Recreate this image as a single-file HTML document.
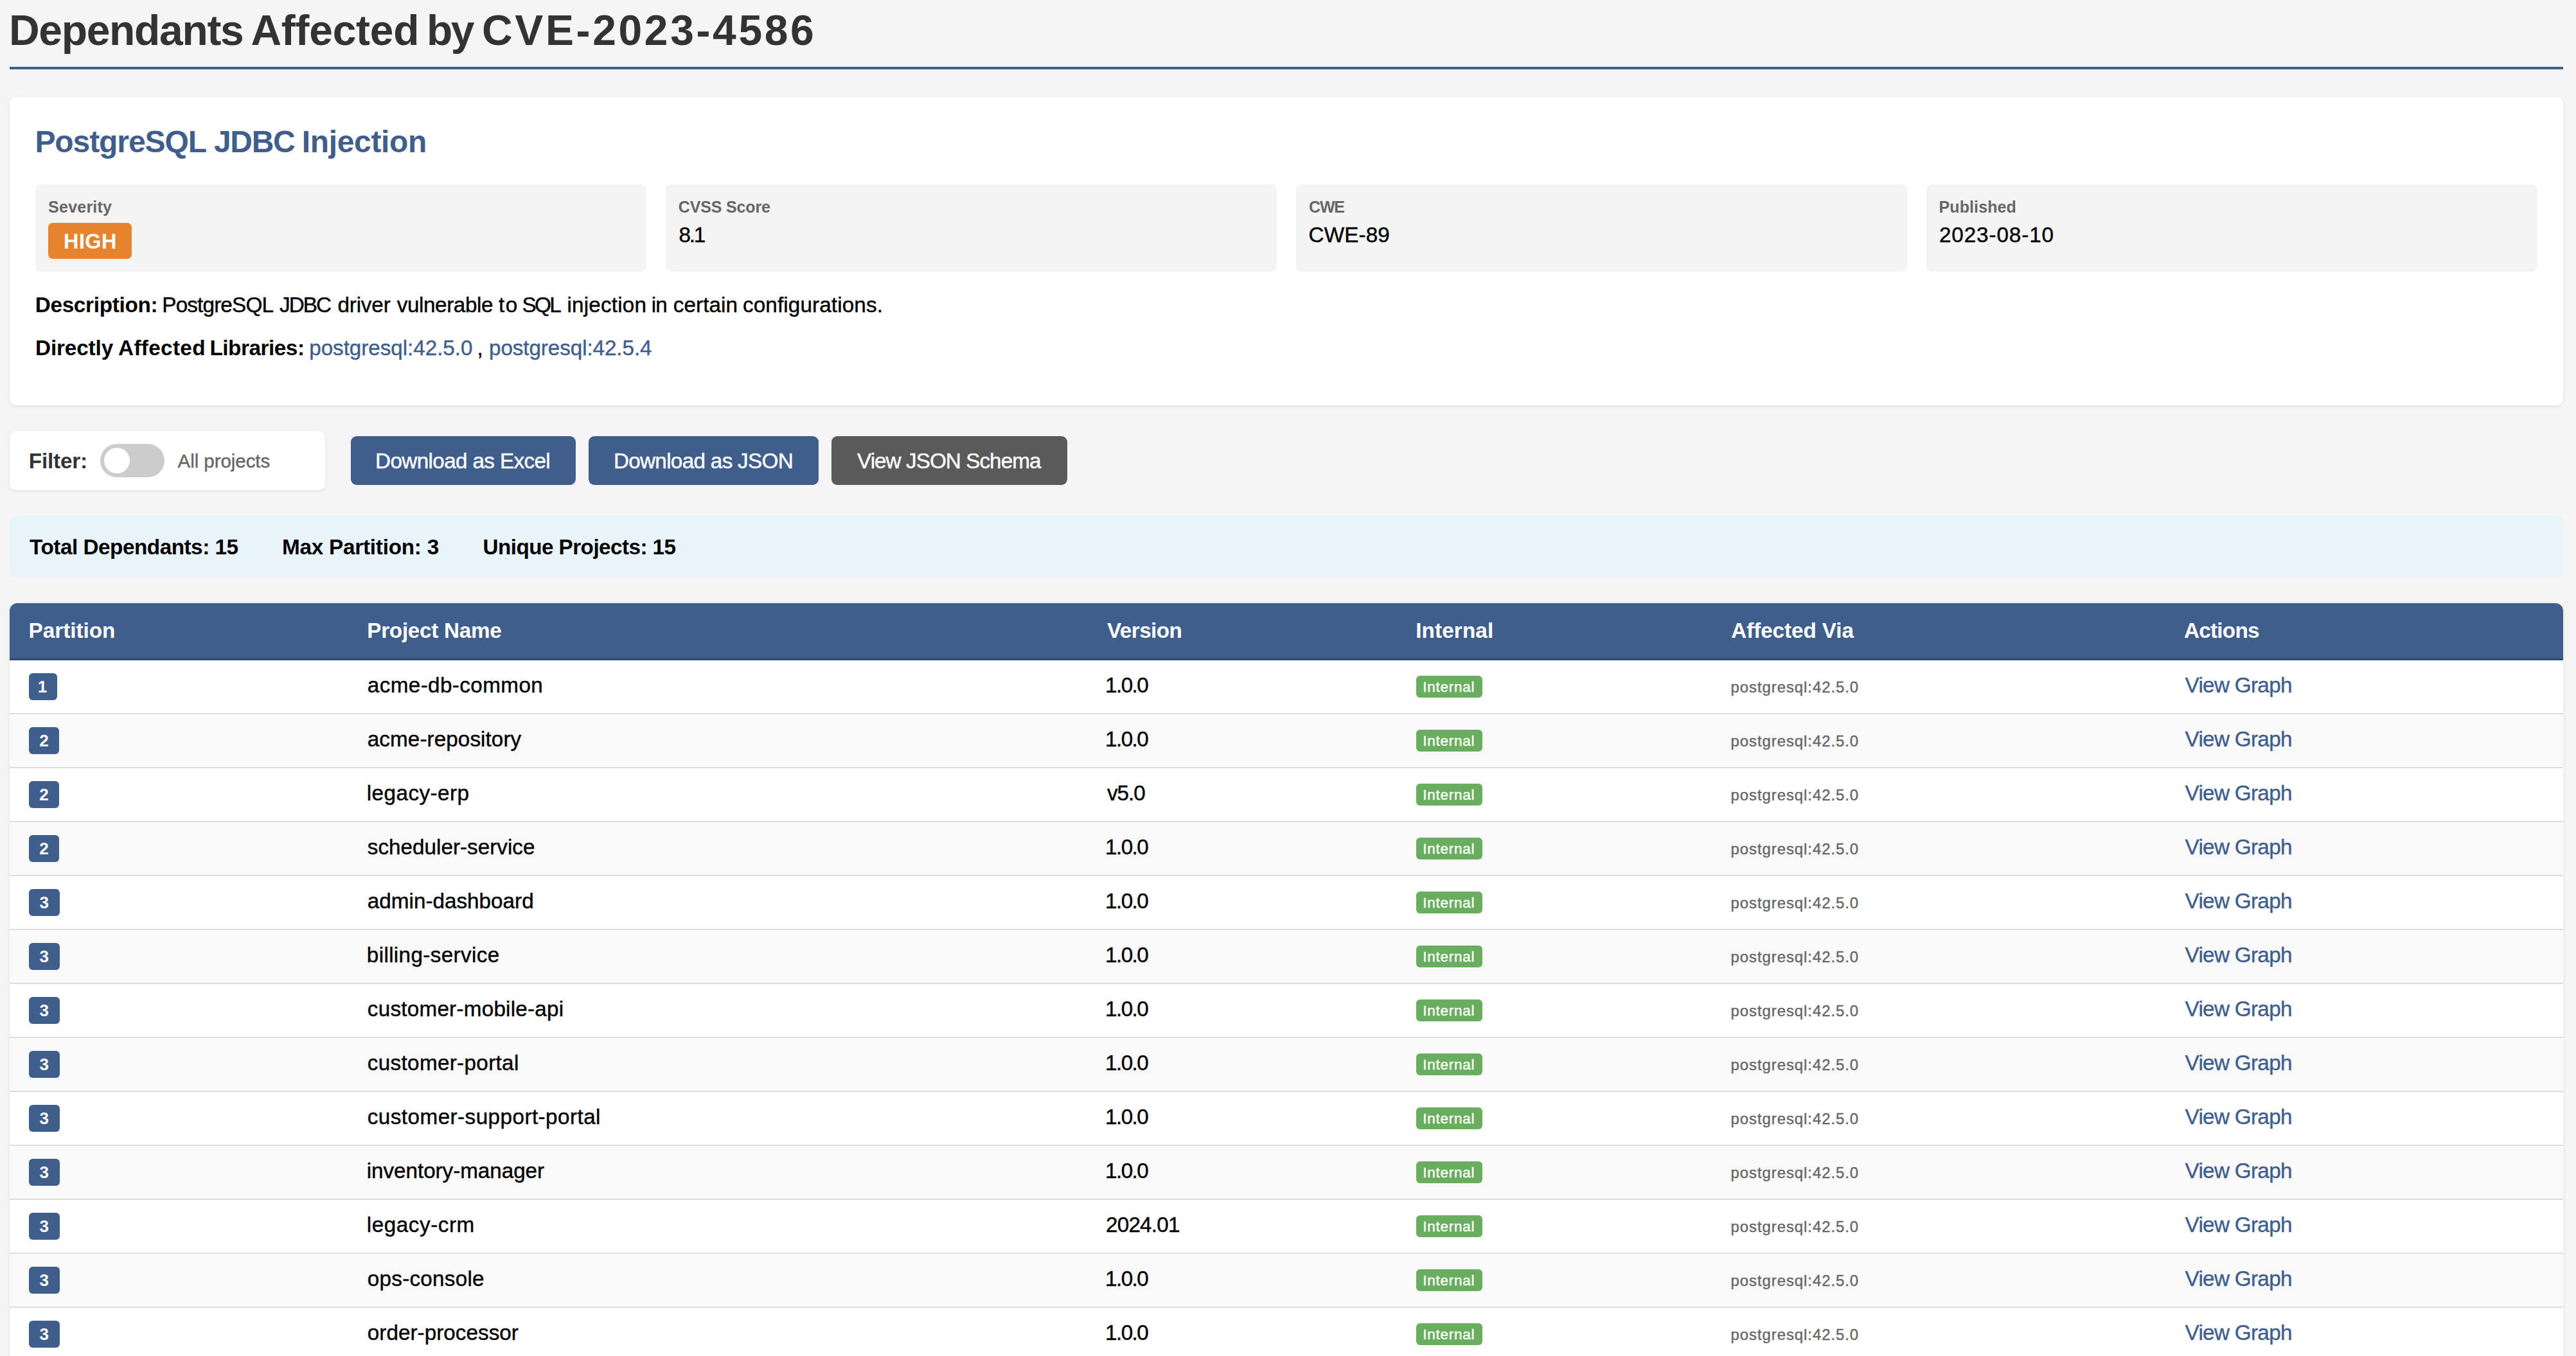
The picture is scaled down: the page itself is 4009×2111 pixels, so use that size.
<!DOCTYPE html>
<html><head><meta charset="utf-8"><title>Dependants Affected by CVE-2023-4586</title>
<style>
html,body{margin:0;padding:0;background:#f5f5f5;width:4009px;height:2111px;overflow:hidden;position:relative}
.b{position:absolute;box-sizing:border-box}
.t{position:absolute;white-space:nowrap}
</style></head><body>
<div class="b" style="left:15px;top:104px;width:3974px;height:4px;background:#3f5e8c"></div>
<div class="b" style="left:15px;top:151px;width:3974px;height:480px;background:#fff;border-radius:10px;box-shadow:0 2px 6px rgba(0,0,0,0.08)"></div>
<div class="b" style="left:55px;top:287px;width:950.5px;height:135.5px;background:#f4f4f4;border-radius:8px"></div>
<div class="b" style="left:1036px;top:287px;width:950.5px;height:135.5px;background:#f4f4f4;border-radius:8px"></div>
<div class="b" style="left:2017px;top:287px;width:950.5px;height:135.5px;background:#f4f4f4;border-radius:8px"></div>
<div class="b" style="left:2998px;top:287px;width:950.5px;height:135.5px;background:#f4f4f4;border-radius:8px"></div>
<div class="b" style="left:75px;top:347px;width:130px;height:55.8px;background:#e6832f;border-radius:7px"></div>
<div class="b" style="left:15px;top:671px;width:491px;height:91.6px;background:#fff;border-radius:10px;box-shadow:0 2px 6px rgba(0,0,0,0.08)"></div>
<div class="b" style="left:156px;top:691px;width:100px;height:52px;background:#ccc;border-radius:26px"></div>
<div class="b" style="left:162px;top:697px;width:40px;height:40px;background:#fff;border-radius:50%"></div>
<div class="b" style="left:546px;top:679.2px;width:350px;height:75.5px;background:#3f5e8c;border-radius:9px"></div>
<div class="b" style="left:916px;top:679.2px;width:357.6px;height:75.5px;background:#3f5e8c;border-radius:9px"></div>
<div class="b" style="left:1294px;top:679.2px;width:366.5px;height:75.5px;background:#5a5a5a;border-radius:9px"></div>
<div class="b" style="left:15px;top:803px;width:3974px;height:95.5px;background:#e8f4fa;border-radius:10px"></div>
<div class="b" style="left:15px;top:939px;width:3974px;height:1212px;background:#fff;border-radius:12px;box-shadow:0 2px 6px rgba(0,0,0,0.08);overflow:hidden"></div>
<div class="b" style="left:15px;top:939px;width:3974px;height:86px;background:#3f5e8c;border-radius:12px 12px 0 0"></div>
<div class="b" style="left:15px;top:1025px;width:3974px;height:3px;background:#2d4a70"></div>
<div class="b" style="left:15px;top:1110px;width:3974px;height:2px;background:#dddddd"></div>
<div class="b" style="left:45px;top:1048px;width:44px;height:42px;background:#3f5e8c;border-radius:6px"></div>
<div class="b" style="left:2204.2px;top:1052px;width:102.5px;height:34px;background:#69ad5e;border-radius:6px"></div>
<div class="b" style="left:15px;top:1112px;width:3974px;height:82px;background:#f9f9f9"></div>
<div class="b" style="left:15px;top:1194px;width:3974px;height:2px;background:#dddddd"></div>
<div class="b" style="left:45px;top:1132px;width:47px;height:42px;background:#3f5e8c;border-radius:6px"></div>
<div class="b" style="left:2204.2px;top:1136px;width:102.5px;height:34px;background:#69ad5e;border-radius:6px"></div>
<div class="b" style="left:15px;top:1278px;width:3974px;height:2px;background:#dddddd"></div>
<div class="b" style="left:45px;top:1216px;width:47px;height:42px;background:#3f5e8c;border-radius:6px"></div>
<div class="b" style="left:2204.2px;top:1220px;width:102.5px;height:34px;background:#69ad5e;border-radius:6px"></div>
<div class="b" style="left:15px;top:1280px;width:3974px;height:82px;background:#f9f9f9"></div>
<div class="b" style="left:15px;top:1362px;width:3974px;height:2px;background:#dddddd"></div>
<div class="b" style="left:45px;top:1300px;width:47px;height:42px;background:#3f5e8c;border-radius:6px"></div>
<div class="b" style="left:2204.2px;top:1304px;width:102.5px;height:34px;background:#69ad5e;border-radius:6px"></div>
<div class="b" style="left:15px;top:1446px;width:3974px;height:2px;background:#dddddd"></div>
<div class="b" style="left:45px;top:1384px;width:48px;height:42px;background:#3f5e8c;border-radius:6px"></div>
<div class="b" style="left:2204.2px;top:1388px;width:102.5px;height:34px;background:#69ad5e;border-radius:6px"></div>
<div class="b" style="left:15px;top:1448px;width:3974px;height:82px;background:#f9f9f9"></div>
<div class="b" style="left:15px;top:1530px;width:3974px;height:2px;background:#dddddd"></div>
<div class="b" style="left:45px;top:1468px;width:48px;height:42px;background:#3f5e8c;border-radius:6px"></div>
<div class="b" style="left:2204.2px;top:1472px;width:102.5px;height:34px;background:#69ad5e;border-radius:6px"></div>
<div class="b" style="left:15px;top:1614px;width:3974px;height:2px;background:#dddddd"></div>
<div class="b" style="left:45px;top:1552px;width:48px;height:42px;background:#3f5e8c;border-radius:6px"></div>
<div class="b" style="left:2204.2px;top:1556px;width:102.5px;height:34px;background:#69ad5e;border-radius:6px"></div>
<div class="b" style="left:15px;top:1616px;width:3974px;height:82px;background:#f9f9f9"></div>
<div class="b" style="left:15px;top:1698px;width:3974px;height:2px;background:#dddddd"></div>
<div class="b" style="left:45px;top:1636px;width:48px;height:42px;background:#3f5e8c;border-radius:6px"></div>
<div class="b" style="left:2204.2px;top:1640px;width:102.5px;height:34px;background:#69ad5e;border-radius:6px"></div>
<div class="b" style="left:15px;top:1782px;width:3974px;height:2px;background:#dddddd"></div>
<div class="b" style="left:45px;top:1720px;width:48px;height:42px;background:#3f5e8c;border-radius:6px"></div>
<div class="b" style="left:2204.2px;top:1724px;width:102.5px;height:34px;background:#69ad5e;border-radius:6px"></div>
<div class="b" style="left:15px;top:1784px;width:3974px;height:82px;background:#f9f9f9"></div>
<div class="b" style="left:15px;top:1866px;width:3974px;height:2px;background:#dddddd"></div>
<div class="b" style="left:45px;top:1804px;width:48px;height:42px;background:#3f5e8c;border-radius:6px"></div>
<div class="b" style="left:2204.2px;top:1808px;width:102.5px;height:34px;background:#69ad5e;border-radius:6px"></div>
<div class="b" style="left:15px;top:1950px;width:3974px;height:2px;background:#dddddd"></div>
<div class="b" style="left:45px;top:1888px;width:48px;height:42px;background:#3f5e8c;border-radius:6px"></div>
<div class="b" style="left:2204.2px;top:1892px;width:102.5px;height:34px;background:#69ad5e;border-radius:6px"></div>
<div class="b" style="left:15px;top:1952px;width:3974px;height:82px;background:#f9f9f9"></div>
<div class="b" style="left:15px;top:2034px;width:3974px;height:2px;background:#dddddd"></div>
<div class="b" style="left:45px;top:1972px;width:48px;height:42px;background:#3f5e8c;border-radius:6px"></div>
<div class="b" style="left:2204.2px;top:1976px;width:102.5px;height:34px;background:#69ad5e;border-radius:6px"></div>
<div class="b" style="left:15px;top:2118px;width:3974px;height:2px;background:#dddddd"></div>
<div class="b" style="left:45px;top:2056px;width:48px;height:42px;background:#3f5e8c;border-radius:6px"></div>
<div class="b" style="left:2204.2px;top:2060px;width:102.5px;height:34px;background:#69ad5e;border-radius:6px"></div>
<div class="t" style="left:14.0px;top:14.0px;font:bold 66px/1 'Liberation Sans', sans-serif;color:#333;letter-spacing:-1.33px;">Dependants</div>
<div class="t" style="left:390.4px;top:14.0px;font:bold 66px/1 'Liberation Sans', sans-serif;color:#333;letter-spacing:-0.26px;">Affected</div>
<div class="t" style="left:664.0px;top:14.0px;font:bold 66px/1 'Liberation Sans', sans-serif;color:#333;letter-spacing:-2.50px;">by</div>
<div class="t" style="left:750.0px;top:14.0px;font:bold 66px/1 'Liberation Sans', sans-serif;color:#333;letter-spacing:3.62px;">CVE-2023-4586</div>
<div class="t" style="left:54.4px;top:197.1px;font:bold 48px/1 'Liberation Sans', sans-serif;color:#3f5e8c;letter-spacing:-1.08px;">PostgreSQL</div>
<div class="t" style="left:332.9px;top:197.1px;font:bold 48px/1 'Liberation Sans', sans-serif;color:#3f5e8c;letter-spacing:-1.27px;">JDBC</div>
<div class="t" style="left:469.8px;top:197.1px;font:bold 48px/1 'Liberation Sans', sans-serif;color:#3f5e8c;letter-spacing:-0.34px;">Injection</div>
<div class="t" style="left:75.1px;top:310.0px;font:bold 25px/1 'Liberation Sans', sans-serif;color:#666;letter-spacing:0.23px;">Severity</div>
<div class="t" style="left:1055.8px;top:310.0px;font:bold 25px/1 'Liberation Sans', sans-serif;color:#666;letter-spacing:-0.16px;">CVSS Score</div>
<div class="t" style="left:2037.0px;top:310.0px;font:bold 25px/1 'Liberation Sans', sans-serif;color:#666;letter-spacing:-1.15px;">CWE</div>
<div class="t" style="left:3017.6px;top:310.0px;font:bold 25px/1 'Liberation Sans', sans-serif;color:#666;letter-spacing:0.09px;">Published</div>
<div class="t" style="left:99.0px;top:359.9px;font:bold 32.5px/1 'Liberation Sans', sans-serif;color:#fff;letter-spacing:0.43px;">HIGH</div>
<div class="t" style="left:1056.6px;top:349.3px;font:33.3px/1 'Liberation Sans', sans-serif;color:#000;letter-spacing:-2.30px;-webkit-text-stroke:0.4px #000;">8.1</div>
<div class="t" style="left:2036.6px;top:349.3px;font:33.3px/1 'Liberation Sans', sans-serif;color:#000;letter-spacing:0.08px;-webkit-text-stroke:0.4px #000;">CWE-89</div>
<div class="t" style="left:3017.9px;top:349.3px;font:33.3px/1 'Liberation Sans', sans-serif;color:#000;letter-spacing:0.88px;-webkit-text-stroke:0.4px #000;">2023-08-10</div>
<div class="t" style="left:54.7px;top:457.6px;font:bold 33.3px/1 'Liberation Sans', sans-serif;color:#000;letter-spacing:-0.30px;">Description:</div>
<div class="t" style="left:252.3px;top:457.6px;font:33.3px/1 'Liberation Sans', sans-serif;color:#000;letter-spacing:-0.86px;-webkit-text-stroke:0.4px #000;">PostgreSQL</div>
<div class="t" style="left:434.9px;top:457.6px;font:33.3px/1 'Liberation Sans', sans-serif;color:#000;letter-spacing:-1.90px;-webkit-text-stroke:0.4px #000;">JDBC</div>
<div class="t" style="left:525.4px;top:457.6px;font:33.3px/1 'Liberation Sans', sans-serif;color:#000;letter-spacing:-0.18px;-webkit-text-stroke:0.4px #000;">driver</div>
<div class="t" style="left:617.8px;top:457.6px;font:33.3px/1 'Liberation Sans', sans-serif;color:#000;letter-spacing:-0.44px;-webkit-text-stroke:0.4px #000;">vulnerable</div>
<div class="t" style="left:776.0px;top:457.6px;font:33.3px/1 'Liberation Sans', sans-serif;color:#000;letter-spacing:1.40px;-webkit-text-stroke:0.4px #000;">to</div>
<div class="t" style="left:812.6px;top:457.6px;font:33.3px/1 'Liberation Sans', sans-serif;color:#000;letter-spacing:-2.70px;-webkit-text-stroke:0.4px #000;">SQL</div>
<div class="t" style="left:882.4px;top:457.6px;font:33.3px/1 'Liberation Sans', sans-serif;color:#000;letter-spacing:0.17px;-webkit-text-stroke:0.4px #000;">injection</div>
<div class="t" style="left:1013.7px;top:457.6px;font:33.3px/1 'Liberation Sans', sans-serif;color:#000;letter-spacing:-0.80px;-webkit-text-stroke:0.4px #000;">in</div>
<div class="t" style="left:1047.8px;top:457.6px;font:33.3px/1 'Liberation Sans', sans-serif;color:#000;letter-spacing:0.05px;-webkit-text-stroke:0.4px #000;">certain</div>
<div class="t" style="left:1155.9px;top:457.6px;font:33.3px/1 'Liberation Sans', sans-serif;color:#000;letter-spacing:0.11px;-webkit-text-stroke:0.4px #000;">configurations.</div>
<div class="t" style="left:55.0px;top:524.7px;font:bold 33.3px/1 'Liberation Sans', sans-serif;color:#000;letter-spacing:-0.14px;">Directly</div>
<div class="t" style="left:184.0px;top:524.7px;font:bold 33.3px/1 'Liberation Sans', sans-serif;color:#000;letter-spacing:0.33px;">Affected</div>
<div class="t" style="left:326.4px;top:524.7px;font:bold 33.3px/1 'Liberation Sans', sans-serif;color:#000;letter-spacing:-0.46px;">Libraries:</div>
<div class="t" style="left:481.2px;top:524.7px;font:33.3px/1 'Liberation Sans', sans-serif;color:#3f5e8c;letter-spacing:-0.07px;-webkit-text-stroke:0.4px #3f5e8c;">postgresql:42.5.0</div>
<div class="t" style="left:742.5px;top:524.7px;font:33.3px/1 'Liberation Sans', sans-serif;color:#000;letter-spacing:0.00px;-webkit-text-stroke:0.4px #000;">,</div>
<div class="t" style="left:761.0px;top:524.7px;font:33.3px/1 'Liberation Sans', sans-serif;color:#3f5e8c;letter-spacing:-0.12px;-webkit-text-stroke:0.4px #3f5e8c;">postgresql:42.5.4</div>
<div class="t" style="left:44.8px;top:701.1px;font:bold 33.3px/1 'Liberation Sans', sans-serif;color:#333;letter-spacing:-0.20px;">Filter:</div>
<div class="t" style="left:276.5px;top:703.1px;font:29.5px/1 'Liberation Sans', sans-serif;color:#666;letter-spacing:-0.05px;-webkit-text-stroke:0.4px #666;">All projects</div>
<div class="t" style="left:584.0px;top:701.3px;font:33.3px/1 'Liberation Sans', sans-serif;color:#fff;letter-spacing:-0.65px;-webkit-text-stroke:0.4px #fff;">Download as Excel</div>
<div class="t" style="left:954.9px;top:701.3px;font:33.3px/1 'Liberation Sans', sans-serif;color:#fff;letter-spacing:-0.71px;-webkit-text-stroke:0.4px #fff;">Download as JSON</div>
<div class="t" style="left:1334.0px;top:701.3px;font:33.3px/1 'Liberation Sans', sans-serif;color:#fff;letter-spacing:-0.97px;-webkit-text-stroke:0.4px #fff;">View JSON Schema</div>
<div class="t" style="left:46.1px;top:835.4px;font:bold 33.3px/1 'Liberation Sans', sans-serif;color:#000;letter-spacing:-0.49px;">Total Dependants: 15</div>
<div class="t" style="left:439.0px;top:835.4px;font:bold 33.3px/1 'Liberation Sans', sans-serif;color:#000;letter-spacing:-0.25px;">Max Partition: 3</div>
<div class="t" style="left:751.6px;top:835.4px;font:bold 33.3px/1 'Liberation Sans', sans-serif;color:#000;letter-spacing:-0.58px;">Unique Projects: 15</div>
<div class="t" style="left:44.5px;top:965.2px;font:bold 33.3px/1 'Liberation Sans', sans-serif;color:#fff;letter-spacing:-0.01px;">Partition</div>
<div class="t" style="left:571.3px;top:965.2px;font:bold 33.3px/1 'Liberation Sans', sans-serif;color:#fff;letter-spacing:-0.30px;">Project Name</div>
<div class="t" style="left:1723.0px;top:965.2px;font:bold 33.3px/1 'Liberation Sans', sans-serif;color:#fff;letter-spacing:-0.57px;">Version</div>
<div class="t" style="left:2203.2px;top:965.2px;font:bold 33.3px/1 'Liberation Sans', sans-serif;color:#fff;letter-spacing:0.11px;">Internal</div>
<div class="t" style="left:2694.2px;top:965.2px;font:bold 33.3px/1 'Liberation Sans', sans-serif;color:#fff;letter-spacing:-0.09px;">Affected Via</div>
<div class="t" style="left:3398.9px;top:965.2px;font:bold 33.3px/1 'Liberation Sans', sans-serif;color:#fff;letter-spacing:-0.75px;">Actions</div>
<div class="t" style="left:58.8px;top:1056.1px;font:bold 26px/1 'Liberation Sans', sans-serif;color:#fff;letter-spacing:0.00px;">1</div>
<div class="t" style="left:571.8px;top:1049.6px;font:33.3px/1 'Liberation Sans', sans-serif;color:#000;letter-spacing:0.36px;-webkit-text-stroke:0.4px #000;">acme-db-common</div>
<div class="t" style="left:1720.0px;top:1049.8px;font:33.3px/1 'Liberation Sans', sans-serif;color:#000;letter-spacing:-1.57px;-webkit-text-stroke:0.4px #000;">1.0.0</div>
<div class="t" style="left:2214.3px;top:1059.3px;font:22.5px/1 'Liberation Sans', sans-serif;color:#fff;letter-spacing:0.73px;-webkit-text-stroke:0.4px #fff;">Internal</div>
<div class="t" style="left:2693.5px;top:1057.7px;font:24px/1 'Liberation Sans', sans-serif;color:#666;letter-spacing:0.91px;-webkit-text-stroke:0.4px #666;">postgresql:42.5.0</div>
<div class="t" style="left:3400.5px;top:1050.0px;font:33.3px/1 'Liberation Sans', sans-serif;color:#3f5e8c;letter-spacing:-0.71px;-webkit-text-stroke:0.4px #3f5e8c;">View Graph</div>
<div class="t" style="left:61.2px;top:1140.1px;font:bold 26px/1 'Liberation Sans', sans-serif;color:#fff;letter-spacing:0.00px;">2</div>
<div class="t" style="left:571.8px;top:1133.6px;font:33.3px/1 'Liberation Sans', sans-serif;color:#000;letter-spacing:0.05px;-webkit-text-stroke:0.4px #000;">acme-repository</div>
<div class="t" style="left:1720.0px;top:1133.8px;font:33.3px/1 'Liberation Sans', sans-serif;color:#000;letter-spacing:-1.57px;-webkit-text-stroke:0.4px #000;">1.0.0</div>
<div class="t" style="left:2214.3px;top:1143.3px;font:22.5px/1 'Liberation Sans', sans-serif;color:#fff;letter-spacing:0.73px;-webkit-text-stroke:0.4px #fff;">Internal</div>
<div class="t" style="left:2693.5px;top:1141.7px;font:24px/1 'Liberation Sans', sans-serif;color:#666;letter-spacing:0.91px;-webkit-text-stroke:0.4px #666;">postgresql:42.5.0</div>
<div class="t" style="left:3400.5px;top:1134.0px;font:33.3px/1 'Liberation Sans', sans-serif;color:#3f5e8c;letter-spacing:-0.71px;-webkit-text-stroke:0.4px #3f5e8c;">View Graph</div>
<div class="t" style="left:61.2px;top:1224.1px;font:bold 26px/1 'Liberation Sans', sans-serif;color:#fff;letter-spacing:0.00px;">2</div>
<div class="t" style="left:570.8px;top:1217.6px;font:33.3px/1 'Liberation Sans', sans-serif;color:#000;letter-spacing:0.41px;-webkit-text-stroke:0.4px #000;">legacy-erp</div>
<div class="t" style="left:1723.0px;top:1217.8px;font:33.3px/1 'Liberation Sans', sans-serif;color:#000;letter-spacing:-1.03px;-webkit-text-stroke:0.4px #000;">v5.0</div>
<div class="t" style="left:2214.3px;top:1227.3px;font:22.5px/1 'Liberation Sans', sans-serif;color:#fff;letter-spacing:0.73px;-webkit-text-stroke:0.4px #fff;">Internal</div>
<div class="t" style="left:2693.5px;top:1225.7px;font:24px/1 'Liberation Sans', sans-serif;color:#666;letter-spacing:0.91px;-webkit-text-stroke:0.4px #666;">postgresql:42.5.0</div>
<div class="t" style="left:3400.5px;top:1218.0px;font:33.3px/1 'Liberation Sans', sans-serif;color:#3f5e8c;letter-spacing:-0.71px;-webkit-text-stroke:0.4px #3f5e8c;">View Graph</div>
<div class="t" style="left:61.2px;top:1308.1px;font:bold 26px/1 'Liberation Sans', sans-serif;color:#fff;letter-spacing:0.00px;">2</div>
<div class="t" style="left:571.8px;top:1301.6px;font:33.3px/1 'Liberation Sans', sans-serif;color:#000;letter-spacing:-0.02px;-webkit-text-stroke:0.4px #000;">scheduler-service</div>
<div class="t" style="left:1720.0px;top:1301.8px;font:33.3px/1 'Liberation Sans', sans-serif;color:#000;letter-spacing:-1.57px;-webkit-text-stroke:0.4px #000;">1.0.0</div>
<div class="t" style="left:2214.3px;top:1311.3px;font:22.5px/1 'Liberation Sans', sans-serif;color:#fff;letter-spacing:0.73px;-webkit-text-stroke:0.4px #fff;">Internal</div>
<div class="t" style="left:2693.5px;top:1309.7px;font:24px/1 'Liberation Sans', sans-serif;color:#666;letter-spacing:0.91px;-webkit-text-stroke:0.4px #666;">postgresql:42.5.0</div>
<div class="t" style="left:3400.5px;top:1302.0px;font:33.3px/1 'Liberation Sans', sans-serif;color:#3f5e8c;letter-spacing:-0.71px;-webkit-text-stroke:0.4px #3f5e8c;">View Graph</div>
<div class="t" style="left:61.5px;top:1392.1px;font:bold 26px/1 'Liberation Sans', sans-serif;color:#fff;letter-spacing:0.00px;">3</div>
<div class="t" style="left:571.8px;top:1385.6px;font:33.3px/1 'Liberation Sans', sans-serif;color:#000;letter-spacing:-0.02px;-webkit-text-stroke:0.4px #000;">admin-dashboard</div>
<div class="t" style="left:1720.0px;top:1385.8px;font:33.3px/1 'Liberation Sans', sans-serif;color:#000;letter-spacing:-1.57px;-webkit-text-stroke:0.4px #000;">1.0.0</div>
<div class="t" style="left:2214.3px;top:1395.3px;font:22.5px/1 'Liberation Sans', sans-serif;color:#fff;letter-spacing:0.73px;-webkit-text-stroke:0.4px #fff;">Internal</div>
<div class="t" style="left:2693.5px;top:1393.7px;font:24px/1 'Liberation Sans', sans-serif;color:#666;letter-spacing:0.91px;-webkit-text-stroke:0.4px #666;">postgresql:42.5.0</div>
<div class="t" style="left:3400.5px;top:1386.0px;font:33.3px/1 'Liberation Sans', sans-serif;color:#3f5e8c;letter-spacing:-0.71px;-webkit-text-stroke:0.4px #3f5e8c;">View Graph</div>
<div class="t" style="left:61.5px;top:1476.1px;font:bold 26px/1 'Liberation Sans', sans-serif;color:#fff;letter-spacing:0.00px;">3</div>
<div class="t" style="left:570.8px;top:1469.6px;font:33.3px/1 'Liberation Sans', sans-serif;color:#000;letter-spacing:0.34px;-webkit-text-stroke:0.4px #000;">billing-service</div>
<div class="t" style="left:1720.0px;top:1469.8px;font:33.3px/1 'Liberation Sans', sans-serif;color:#000;letter-spacing:-1.57px;-webkit-text-stroke:0.4px #000;">1.0.0</div>
<div class="t" style="left:2214.3px;top:1479.3px;font:22.5px/1 'Liberation Sans', sans-serif;color:#fff;letter-spacing:0.73px;-webkit-text-stroke:0.4px #fff;">Internal</div>
<div class="t" style="left:2693.5px;top:1477.7px;font:24px/1 'Liberation Sans', sans-serif;color:#666;letter-spacing:0.91px;-webkit-text-stroke:0.4px #666;">postgresql:42.5.0</div>
<div class="t" style="left:3400.5px;top:1470.0px;font:33.3px/1 'Liberation Sans', sans-serif;color:#3f5e8c;letter-spacing:-0.71px;-webkit-text-stroke:0.4px #3f5e8c;">View Graph</div>
<div class="t" style="left:61.5px;top:1560.1px;font:bold 26px/1 'Liberation Sans', sans-serif;color:#fff;letter-spacing:0.00px;">3</div>
<div class="t" style="left:571.8px;top:1553.6px;font:33.3px/1 'Liberation Sans', sans-serif;color:#000;letter-spacing:0.21px;-webkit-text-stroke:0.4px #000;">customer-mobile-api</div>
<div class="t" style="left:1720.0px;top:1553.8px;font:33.3px/1 'Liberation Sans', sans-serif;color:#000;letter-spacing:-1.57px;-webkit-text-stroke:0.4px #000;">1.0.0</div>
<div class="t" style="left:2214.3px;top:1563.3px;font:22.5px/1 'Liberation Sans', sans-serif;color:#fff;letter-spacing:0.73px;-webkit-text-stroke:0.4px #fff;">Internal</div>
<div class="t" style="left:2693.5px;top:1561.7px;font:24px/1 'Liberation Sans', sans-serif;color:#666;letter-spacing:0.91px;-webkit-text-stroke:0.4px #666;">postgresql:42.5.0</div>
<div class="t" style="left:3400.5px;top:1554.0px;font:33.3px/1 'Liberation Sans', sans-serif;color:#3f5e8c;letter-spacing:-0.71px;-webkit-text-stroke:0.4px #3f5e8c;">View Graph</div>
<div class="t" style="left:61.5px;top:1644.1px;font:bold 26px/1 'Liberation Sans', sans-serif;color:#fff;letter-spacing:0.00px;">3</div>
<div class="t" style="left:571.8px;top:1637.6px;font:33.3px/1 'Liberation Sans', sans-serif;color:#000;letter-spacing:0.30px;-webkit-text-stroke:0.4px #000;">customer-portal</div>
<div class="t" style="left:1720.0px;top:1637.8px;font:33.3px/1 'Liberation Sans', sans-serif;color:#000;letter-spacing:-1.57px;-webkit-text-stroke:0.4px #000;">1.0.0</div>
<div class="t" style="left:2214.3px;top:1647.3px;font:22.5px/1 'Liberation Sans', sans-serif;color:#fff;letter-spacing:0.73px;-webkit-text-stroke:0.4px #fff;">Internal</div>
<div class="t" style="left:2693.5px;top:1645.7px;font:24px/1 'Liberation Sans', sans-serif;color:#666;letter-spacing:0.91px;-webkit-text-stroke:0.4px #666;">postgresql:42.5.0</div>
<div class="t" style="left:3400.5px;top:1638.0px;font:33.3px/1 'Liberation Sans', sans-serif;color:#3f5e8c;letter-spacing:-0.71px;-webkit-text-stroke:0.4px #3f5e8c;">View Graph</div>
<div class="t" style="left:61.5px;top:1728.1px;font:bold 26px/1 'Liberation Sans', sans-serif;color:#fff;letter-spacing:0.00px;">3</div>
<div class="t" style="left:571.8px;top:1721.6px;font:33.3px/1 'Liberation Sans', sans-serif;color:#000;letter-spacing:0.42px;-webkit-text-stroke:0.4px #000;">customer-support-portal</div>
<div class="t" style="left:1720.0px;top:1721.8px;font:33.3px/1 'Liberation Sans', sans-serif;color:#000;letter-spacing:-1.57px;-webkit-text-stroke:0.4px #000;">1.0.0</div>
<div class="t" style="left:2214.3px;top:1731.3px;font:22.5px/1 'Liberation Sans', sans-serif;color:#fff;letter-spacing:0.73px;-webkit-text-stroke:0.4px #fff;">Internal</div>
<div class="t" style="left:2693.5px;top:1729.7px;font:24px/1 'Liberation Sans', sans-serif;color:#666;letter-spacing:0.91px;-webkit-text-stroke:0.4px #666;">postgresql:42.5.0</div>
<div class="t" style="left:3400.5px;top:1722.0px;font:33.3px/1 'Liberation Sans', sans-serif;color:#3f5e8c;letter-spacing:-0.71px;-webkit-text-stroke:0.4px #3f5e8c;">View Graph</div>
<div class="t" style="left:61.5px;top:1812.1px;font:bold 26px/1 'Liberation Sans', sans-serif;color:#fff;letter-spacing:0.00px;">3</div>
<div class="t" style="left:570.8px;top:1805.6px;font:33.3px/1 'Liberation Sans', sans-serif;color:#000;letter-spacing:-0.08px;-webkit-text-stroke:0.4px #000;">inventory-manager</div>
<div class="t" style="left:1720.0px;top:1805.8px;font:33.3px/1 'Liberation Sans', sans-serif;color:#000;letter-spacing:-1.57px;-webkit-text-stroke:0.4px #000;">1.0.0</div>
<div class="t" style="left:2214.3px;top:1815.3px;font:22.5px/1 'Liberation Sans', sans-serif;color:#fff;letter-spacing:0.73px;-webkit-text-stroke:0.4px #fff;">Internal</div>
<div class="t" style="left:2693.5px;top:1813.7px;font:24px/1 'Liberation Sans', sans-serif;color:#666;letter-spacing:0.91px;-webkit-text-stroke:0.4px #666;">postgresql:42.5.0</div>
<div class="t" style="left:3400.5px;top:1806.0px;font:33.3px/1 'Liberation Sans', sans-serif;color:#3f5e8c;letter-spacing:-0.71px;-webkit-text-stroke:0.4px #3f5e8c;">View Graph</div>
<div class="t" style="left:61.5px;top:1896.1px;font:bold 26px/1 'Liberation Sans', sans-serif;color:#fff;letter-spacing:0.00px;">3</div>
<div class="t" style="left:570.8px;top:1889.6px;font:33.3px/1 'Liberation Sans', sans-serif;color:#000;letter-spacing:0.52px;-webkit-text-stroke:0.4px #000;">legacy-crm</div>
<div class="t" style="left:1721.0px;top:1889.8px;font:33.3px/1 'Liberation Sans', sans-serif;color:#000;letter-spacing:-0.82px;-webkit-text-stroke:0.4px #000;">2024.01</div>
<div class="t" style="left:2214.3px;top:1899.3px;font:22.5px/1 'Liberation Sans', sans-serif;color:#fff;letter-spacing:0.73px;-webkit-text-stroke:0.4px #fff;">Internal</div>
<div class="t" style="left:2693.5px;top:1897.7px;font:24px/1 'Liberation Sans', sans-serif;color:#666;letter-spacing:0.91px;-webkit-text-stroke:0.4px #666;">postgresql:42.5.0</div>
<div class="t" style="left:3400.5px;top:1890.0px;font:33.3px/1 'Liberation Sans', sans-serif;color:#3f5e8c;letter-spacing:-0.71px;-webkit-text-stroke:0.4px #3f5e8c;">View Graph</div>
<div class="t" style="left:61.5px;top:1980.1px;font:bold 26px/1 'Liberation Sans', sans-serif;color:#fff;letter-spacing:0.00px;">3</div>
<div class="t" style="left:571.8px;top:1973.6px;font:33.3px/1 'Liberation Sans', sans-serif;color:#000;letter-spacing:0.22px;-webkit-text-stroke:0.4px #000;">ops-console</div>
<div class="t" style="left:1720.0px;top:1973.8px;font:33.3px/1 'Liberation Sans', sans-serif;color:#000;letter-spacing:-1.57px;-webkit-text-stroke:0.4px #000;">1.0.0</div>
<div class="t" style="left:2214.3px;top:1983.3px;font:22.5px/1 'Liberation Sans', sans-serif;color:#fff;letter-spacing:0.73px;-webkit-text-stroke:0.4px #fff;">Internal</div>
<div class="t" style="left:2693.5px;top:1981.7px;font:24px/1 'Liberation Sans', sans-serif;color:#666;letter-spacing:0.91px;-webkit-text-stroke:0.4px #666;">postgresql:42.5.0</div>
<div class="t" style="left:3400.5px;top:1974.0px;font:33.3px/1 'Liberation Sans', sans-serif;color:#3f5e8c;letter-spacing:-0.71px;-webkit-text-stroke:0.4px #3f5e8c;">View Graph</div>
<div class="t" style="left:61.5px;top:2064.1px;font:bold 26px/1 'Liberation Sans', sans-serif;color:#fff;letter-spacing:0.00px;">3</div>
<div class="t" style="left:571.8px;top:2057.6px;font:33.3px/1 'Liberation Sans', sans-serif;color:#000;letter-spacing:0.01px;-webkit-text-stroke:0.4px #000;">order-processor</div>
<div class="t" style="left:1720.0px;top:2057.8px;font:33.3px/1 'Liberation Sans', sans-serif;color:#000;letter-spacing:-1.57px;-webkit-text-stroke:0.4px #000;">1.0.0</div>
<div class="t" style="left:2214.3px;top:2067.3px;font:22.5px/1 'Liberation Sans', sans-serif;color:#fff;letter-spacing:0.73px;-webkit-text-stroke:0.4px #fff;">Internal</div>
<div class="t" style="left:2693.5px;top:2065.7px;font:24px/1 'Liberation Sans', sans-serif;color:#666;letter-spacing:0.91px;-webkit-text-stroke:0.4px #666;">postgresql:42.5.0</div>
<div class="t" style="left:3400.5px;top:2058.0px;font:33.3px/1 'Liberation Sans', sans-serif;color:#3f5e8c;letter-spacing:-0.71px;-webkit-text-stroke:0.4px #3f5e8c;">View Graph</div>
</body></html>
